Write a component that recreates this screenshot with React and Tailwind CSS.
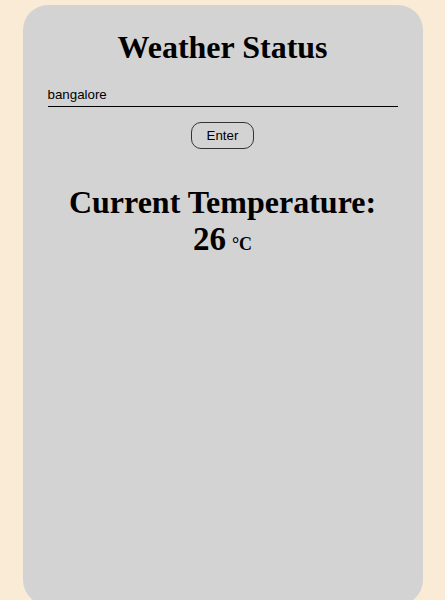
import React, { useState } from 'react';

function App() {
  const [city, setCity] = useState('bangalore');

  return (
    <div className="h-[600px] overflow-hidden bg-[#faebd7] pt-[5px]">
      <div className="mx-auto flex h-[600px] w-[400px] flex-col items-center rounded-[25px] bg-[#d3d3d3] font-['Liberation_Serif',serif] text-black">
        <h1 className="mt-[24px] text-[32px] font-bold leading-[37px]">Weather Status</h1>

        <input
          type="text"
          value={city}
          onChange={(e) => setCity(e.target.value)}
          className="mt-[20px] h-[21px] w-[350px] border-b border-black bg-transparent pt-0 pb-[4px] font-['Liberation_Sans',sans-serif] text-[13.33px] text-black outline-none"
        />

        <button className="mt-[15px] rounded-[10px] border border-[#333] bg-transparent px-[15px] py-[5px] font-['Liberation_Sans',sans-serif] text-[13.33px] leading-[15px] text-black">
          Enter
        </button>

        <h1 className="mt-[35px] text-center text-[32px] font-bold leading-[37px]">
          Current Temperature:
          <br />
          <span className="text-[33px]">26</span>
          <span className="ml-[6px] text-[18px]">°C</span>
        </h1>
      </div>
    </div>
  );
}

export default App;
